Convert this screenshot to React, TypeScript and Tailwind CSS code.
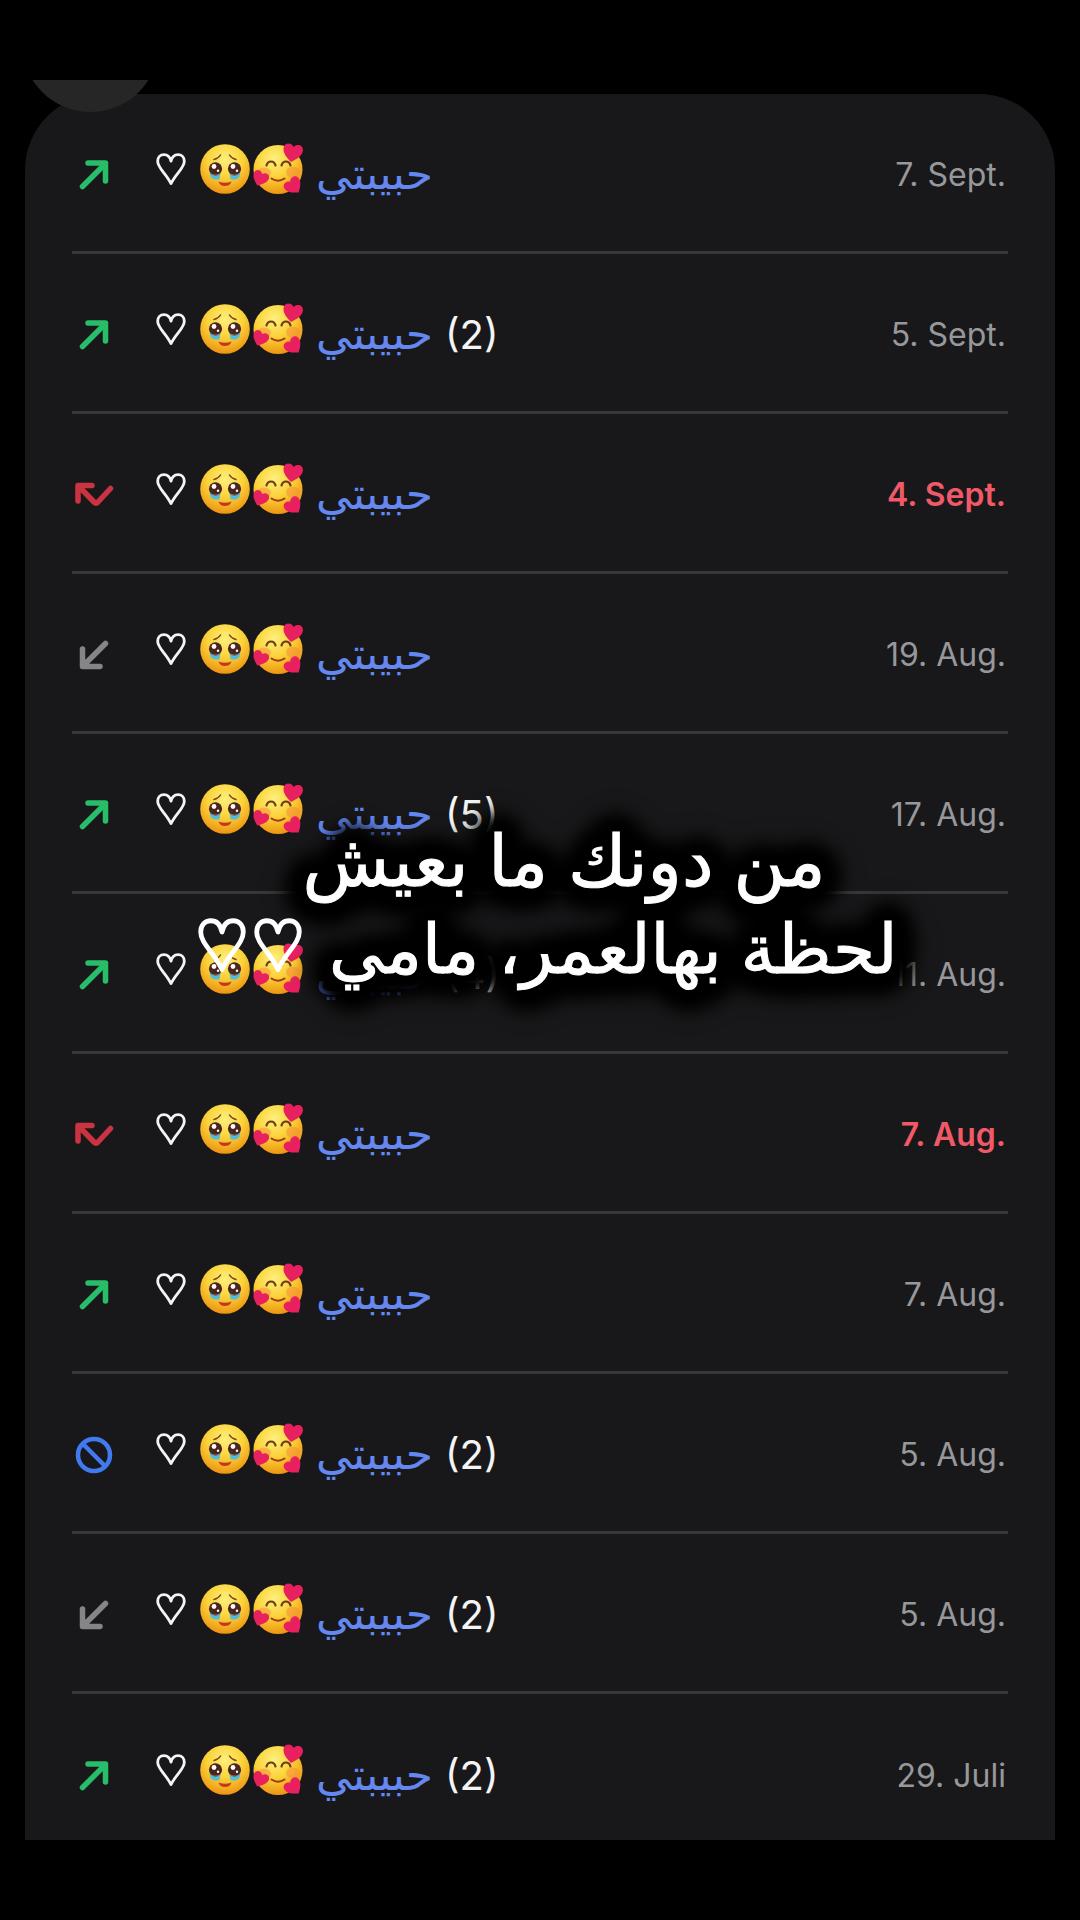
import { useId } from "react";

type CallKind = "outgoing" | "incoming" | "missed" | "rejected";

interface Call {
  kind: CallKind;
  count?: number;
  date: string;
}

const NAME = "حبيبتي";

const CALLS: Call[] = [
  { kind: "outgoing", date: "7. Sept." },
  { kind: "outgoing", count: 2, date: "5. Sept." },
  { kind: "missed", date: "4. Sept." },
  { kind: "incoming", date: "19. Aug." },
  { kind: "outgoing", count: 5, date: "17. Aug." },
  { kind: "outgoing", count: 4, date: "11. Aug." },
  { kind: "missed", date: "7. Aug." },
  { kind: "outgoing", date: "7. Aug." },
  { kind: "rejected", count: 2, date: "5. Aug." },
  { kind: "incoming", count: 2, date: "5. Aug." },
  { kind: "outgoing", count: 2, date: "29. Juli" },
];

function CallIcon({ kind }: { kind: CallKind }) {
  const common = {
    viewBox: "0 0 44 44",
    fill: "none",
    stroke: "currentColor",
    strokeWidth: 5.5,
    strokeLinecap: "round" as const,
    strokeLinejoin: "round" as const,
  };
  if (kind === "outgoing") {
    return (
      <svg {...common} className="size-11 text-[#27bd69]" aria-label="Outgoing">
        <path d="M10.500 33.500 33 11M16 10h17.500V28" />
      </svg>
    );
  }
  if (kind === "incoming") {
    return (
      <svg {...common} className="size-11 text-[#858587]" aria-label="Incoming">
        <path d="M33.500 10.500 11 33M10.500 16v17.500H28" />
      </svg>
    );
  }
  if (kind === "missed") {
    return (
      <svg {...common} className="size-11 text-[#c93440]" aria-label="Missed">
        <path d="M6 28V12.500H20M7 13.500 22 29Q24 31 26 29L38.500 15.500" />
      </svg>
    );
  }
  return (
    <svg {...common} strokeWidth={4.5} className="size-11 text-[#4179ee]" aria-label="Rejected">
      <circle cx="22" cy="22" r="16" />
      <path d="M11 11 33 33" />
    </svg>
  );
}

function Heart({ className, weight }: { className: string; weight: number }) {
  return (
    <svg
      viewBox="0 0 30 33"
      className={className}
      fill="none"
      stroke="currentColor"
      strokeWidth={weight}
      strokeLinejoin="round"
      preserveAspectRatio="none"
      aria-label="♡"
    >
      <path d="M15 8.500C14 4 11.500 1.700 8 1.700 4.200 1.700 1.700 4.500 1.700 8.500 1.700 15.500 10 21 15 31.500 20 21 28.300 15.500 28.300 8.500 28.300 4.500 25.800 1.700 22 1.700 18.500 1.700 16 4 15 8.500Z" />
    </svg>
  );
}

function TearyFace() {
  const id = useId();
  return (
    <svg viewBox="0 0 50 50" className="size-[50px]" aria-label="🥹">
      <defs>
        <radialGradient id={id} cx="0.5" cy="0.3" r="0.72">
          <stop offset="0" stopColor="#fdf07e" />
          <stop offset="0.5" stopColor="#fbd239" />
          <stop offset="1" stopColor="#ec9010" />
        </radialGradient>
      </defs>
      <circle cx="25" cy="25" r="24.800" fill={`url(#${id})`} />
      <path d="M14 15.500Q18.500 14.500 20.500 11M29.500 11Q31.500 14.500 36 15.500" stroke="#7a4a16" strokeWidth="1.500" fill="none" strokeLinecap="round" />
      <path d="M9.500 28Q15 33 20.500 29.500L19.500 35Q14 37 10.500 33ZM40.500 28Q35 33 29.500 29.500L30.500 35Q36 37 39.500 33Z" fill="#52bdd8" />
      <circle cx="15.500" cy="24.800" r="6.600" fill="#49251c" />
      <circle cx="34.500" cy="24.800" r="6.600" fill="#49251c" />
      <path d="M11 29q4.500 3 9 0-1 2.500-4.500 2.500T11 29M30 29q4.500 3 9 0-1 2.500-4.500 2.500T30 29" fill="#9a6a58" />
      <g fill="#fff">
        <circle cx="14" cy="22.500" r="2.400" />
        <circle cx="33" cy="22.500" r="2.400" />
        <circle cx="18" cy="26.800" r="1.200" />
        <circle cx="37" cy="26.800" r="1.200" />
      </g>
      <path d="M18.500 37.500q6.500 2.500 13 0-1.500 4.500-6.500 4.500t-6.500-4.500" fill="#c03a22" />
    </svg>
  );
}

const SMALL_HEART = "M0 7C-4 4-8 1-8-3.500-8-8-2.500-9 0-5.500 2.500-9 8-8 8-3.500 8 1 4 4 0 7Z";

function LovingFace() {
  const id = useId();
  return (
    <svg viewBox="0 0 52 52" className="size-[52px]" aria-label="🥰">
      <defs>
        <radialGradient id={id} cx="0.42" cy="0.28" r="0.75">
          <stop offset="0" stopColor="#fdf07e" />
          <stop offset="0.5" stopColor="#fbd239" />
          <stop offset="1" stopColor="#ec9010" />
        </radialGradient>
      </defs>
      <circle cx="26" cy="26.500" r="24.500" fill={`url(#${id})`} />
      <ellipse cx="12" cy="30" rx="7" ry="5.500" fill="#f58a3c" opacity="0.5" />
      <ellipse cx="41" cy="29" rx="7" ry="5.500" fill="#f58a3c" opacity="0.5" />
      <path d="M14.500 22.500Q15.500 18.500 19 18.500T23.500 22.500M29.500 22.500Q30.500 18.500 34 18.500T38.500 22.500" stroke="#6d3d15" strokeWidth="2.200" fill="none" strokeLinecap="round" />
      <path d="M19.500 35.500Q26 40 32.500 35.500" stroke="#9a3d14" strokeWidth="2" fill="none" strokeLinecap="round" />
      <g fill="#e8205f">
        <path d={SMALL_HEART} transform="translate(40.500 10.500) rotate(10) scale(1.220)" />
        <path d={SMALL_HEART} transform="translate(8 36) rotate(24) scale(1)" />
        <path d={SMALL_HEART} transform="translate(42 43.500) rotate(-38) scale(1.100)" />
      </g>
    </svg>
  );
}

function CallRow({ call }: { call: Call }) {
  const missed = call.kind === "missed";
  return (
    <li className="flex h-40 items-center border-b-[3px] border-[#38383a] pt-1 last:border-b-0">
      <CallIcon kind={call.kind} />
      <div className="ml-10 flex flex-1 items-center text-[40px] leading-[48px] text-[#f4f4f5]">
        <div className="flex items-center gap-0.5 pb-3">
          <Heart className="mr-3 h-8 w-[30px]" weight={2.8} />
          <TearyFace />
          <LovingFace />
        </div>
        <span dir="rtl" lang="ar" className="ml-3 pb-1 text-[44px] text-[#6488f0]">{NAME}</span>
        {call.count && <span className="ml-3">({call.count})</span>}
      </div>
      <time className={missed ? "pr-0.5 text-[32px] font-semibold text-[#f05a68]" : "pr-0.5 text-[32px] text-[#98989a]"}>{call.date}</time>
    </li>
  );
}

export default function App() {
  return (
    <div className="min-h-screen bg-black py-20 font-['Inter','DejaVu_Sans',sans-serif]">
      <main className="relative h-[calc(100vh-160px)] overflow-hidden pt-[14px]">
        <ul className="mx-[25px] h-full rounded-t-[76px] bg-[#18181a] px-[47px]">
          {CALLS.map((call, i) => (
            <CallRow key={i} call={call} />
          ))}
        </ul>
        <div className="absolute -top-[105px] left-[22px] size-[137px] rounded-full bg-[#262627]" />
        {/* caption over the list */}
        <div className="absolute inset-x-0 top-[736px] flex items-end justify-center pl-4 leading-[88px] whitespace-nowrap text-white">
          <div dir="rtl" lang="ar" className="order-last [-webkit-text-stroke:1px_#fff] [filter:drop-shadow(0_0_8px_#000)_drop-shadow(0_0_8px_#000)_drop-shadow(0_0_8px_#000)_drop-shadow(0_0_8px_#000)_drop-shadow(0_0_8px_#000)_drop-shadow(0_0_6px_#000)]">
            <p className="mr-[72px] text-[71px]">من دونك ما بعيش</p>
            <p className="text-[68px]">لحظة بهالعمر، مامي</p>
          </div>
          <div className="z-10 mb-5 flex gap-2">
            <Heart className="h-[54px] w-12" weight={3} />
            <Heart className="h-[54px] w-12" weight={3} />
          </div>
        </div>
      </main>
    </div>
  );
}
